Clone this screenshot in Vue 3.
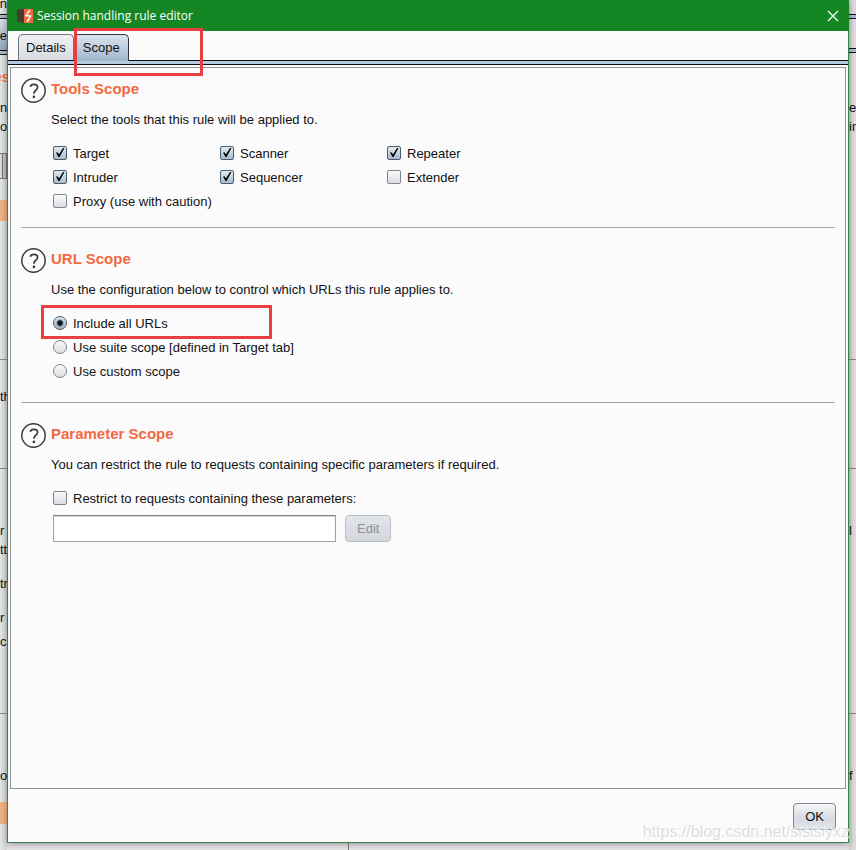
<script setup>
import { ref } from 'vue'

const tools = ref([
  { name: 'Target', on: true },
  { name: 'Scanner', on: true },
  { name: 'Repeater', on: true },
  { name: 'Intruder', on: true },
  { name: 'Sequencer', on: true },
  { name: 'Extender', on: false },
  { name: 'Proxy (use with caution)', on: false },
])

const urlScopes = [
  { id: 'all', label: 'Include all URLs' },
  { id: 'suite', label: 'Use suite scope [defined in Target tab]' },
  { id: 'custom', label: 'Use custom scope' },
]
const urlScope = ref('all')
const restrict = ref(false)
const parameters = ref('')

// Pieces of the parent window that show on either side of the dialog.
const leftTexts = [
  { text: 'n', top: -6 },
  { text: 'Se', top: 26 },
  { text: 'es', top: 67, heading: true },
  { text: 'nc', top: 98, start: true },
  { text: 'o', top: 117, start: true },
  { text: 'th', top: 387, start: true },
  { text: 'r t', top: 521, start: true },
  { text: 'tt', top: 540, start: true },
  { text: 'tr', top: 574, start: true },
  { text: 'r', top: 608, start: true },
  { text: 'c', top: 632, start: true },
  { text: 'or', top: 766, start: true },
]
const rightTexts = [
  { text: 'et', top: 98 },
  { text: 'in', top: 117 },
  { text: 'l .', top: 521 },
  { text: 'f t', top: 766 },
]
const leftRules = [359, 468, 713]
const rightRules = [359, 468, 713]
const swatches = [
  { top: 200, height: 21 },
  { top: 802, height: 22 },
]
</script>

<template>
  <div class="desktop">
    <div class="parent parent-left" aria-hidden="true">
      <i class="tab-fill"></i>
      <i class="band" :style="{ top: '14px' }"></i>
      <i class="band" :style="{ top: '50px' }"></i>
      <i v-for="y in leftRules" :key="y" class="rule" :style="{ top: y + 'px' }"></i>
      <i class="side-button"></i>
      <i
        v-for="s in swatches"
        :key="s.top"
        class="swatch"
        :style="{ top: s.top + 'px', height: s.height + 'px' }"
      ></i>
      <span
        v-for="t in leftTexts"
        :key="t.top"
        :class="['bit', { heading: t.heading, start: t.start }]"
        :style="{ top: t.top + 'px' }"
      >{{ t.text }}</span>
    </div>
    <div class="parent parent-right" aria-hidden="true">
      <i class="band" :style="{ top: '14px' }"></i>
      <i class="band" :style="{ top: '48px' }"></i>
      <i v-for="y in rightRules" :key="y" class="rule" :style="{ top: y + 'px' }"></i>
      <span v-for="t in rightTexts" :key="t.top" class="bit start" :style="{ top: t.top + 'px' }">{{ t.text }}</span>
    </div>
    <i class="splitter"></i>

    <main class="dialog">
      <header class="titlebar">
        <svg class="logo" width="16" height="16" viewBox="0 0 16 16" aria-hidden="true">
          <path d="M0 1.500L7 1v14l-7-1.500z" fill="#4a3a34" />
          <path d="M7 1h9v14H7z" fill="#f4683a" />
          <path d="M12.800 2L9 7.600l4.600 0.600L10 14" fill="none" stroke="#fff" stroke-width="1.500" />
        </svg>
        <h1 class="title">Session handling rule editor</h1>
        <button class="close" type="button" aria-label="Close">
          <svg width="12" height="12" viewBox="0 0 12 12"><path d="M1 1l10 10M11 1L1 11" stroke="#fff" stroke-width="1.200" /></svg>
        </button>
      </header>

      <nav class="tabs">
        <button class="tab" type="button">Details</button>
        <div class="tab-holder">
          <button class="tab active" type="button">Scope</button>
          <i class="mark mark-tab"></i>
        </div>
      </nav>
      <div class="tab-line"></div>

      <div class="panel">
        <section class="section">
          <svg class="help" width="26" height="26" viewBox="0 0 26 26" aria-hidden="true">
            <circle cx="12.500" cy="12.500" r="11.700" fill="none" stroke="#3c3c3c" stroke-width="1.500" />
            <path d="M9.300 8.700C9.700 7 11 6.300 12.900 6.300c2.200 0 3.700 1.100 3.700 3 0 1.500-.8 2.300-2 3.200-1.200.9-1.700 1.500-1.700 3.300" fill="none" stroke="#3c3c3c" stroke-width="1.700" />
            <circle cx="12.900" cy="18.900" r="1.300" fill="#3c3c3c" />
          </svg>
          <div class="content">
            <h2>Tools Scope</h2>
            <p>Select the tools that this rule will be applied to.</p>
            <div class="options grid">
              <label v-for="t in tools" :key="t.name" class="option">
                <span class="box">
                  <input v-model="t.on" type="checkbox">
                  <svg v-if="t.on" class="tick" width="14" height="14" viewBox="0 0 14 14"><path d="M3 6.500h1.800L6 8.600 10 2h1.500L6.600 11H5.400z" fill="#000" /></svg>
                </span>
                {{ t.name }}
              </label>
            </div>
          </div>
        </section>

        <section class="section">
          <svg class="help" width="26" height="26" viewBox="0 0 26 26" aria-hidden="true">
            <circle cx="12.500" cy="12.500" r="11.700" fill="none" stroke="#3c3c3c" stroke-width="1.500" />
            <path d="M9.300 8.700C9.700 7 11 6.300 12.900 6.300c2.200 0 3.700 1.100 3.700 3 0 1.500-.8 2.300-2 3.200-1.200.9-1.700 1.500-1.700 3.300" fill="none" stroke="#3c3c3c" stroke-width="1.700" />
            <circle cx="12.900" cy="18.900" r="1.300" fill="#3c3c3c" />
          </svg>
          <div class="content">
            <h2>URL Scope</h2>
            <p>Use the configuration below to control which URLs this rule applies to.</p>
            <div class="options">
              <i class="mark mark-option"></i>
              <label v-for="s in urlScopes" :key="s.id" class="option">
                <span class="box"><input v-model="urlScope" type="radio" name="url-scope" :value="s.id"></span>
                {{ s.label }}
              </label>
            </div>
          </div>
        </section>

        <section class="section">
          <svg class="help" width="26" height="26" viewBox="0 0 26 26" aria-hidden="true">
            <circle cx="12.500" cy="12.500" r="11.700" fill="none" stroke="#3c3c3c" stroke-width="1.500" />
            <path d="M9.300 8.700C9.700 7 11 6.300 12.900 6.300c2.200 0 3.700 1.100 3.700 3 0 1.500-.8 2.300-2 3.200-1.200.9-1.700 1.500-1.700 3.300" fill="none" stroke="#3c3c3c" stroke-width="1.700" />
            <circle cx="12.900" cy="18.900" r="1.300" fill="#3c3c3c" />
          </svg>
          <div class="content">
            <h2>Parameter Scope</h2>
            <p>You can restrict the rule to requests containing specific parameters if required.</p>
            <div class="options">
              <label class="option">
                <span class="box">
                  <input v-model="restrict" type="checkbox">
                  <svg v-if="restrict" class="tick" width="14" height="14" viewBox="0 0 14 14"><path d="M3 6.500h1.800L6 8.600 10 2h1.500L6.600 11H5.400z" fill="#000" /></svg>
                </span>
                Restrict to requests containing these parameters:
              </label>
              <div class="entry">
                <input v-model="parameters" class="field" type="text" aria-label="Parameters" :disabled="!restrict">
                <button class="btn" type="button" :disabled="!restrict">Edit</button>
              </div>
            </div>
          </div>
        </section>
      </div>

      <footer class="footer">
        <button class="btn ok" type="button">OK</button>
      </footer>
    </main>
    <span class="watermark">https://blog.csdn.net/sisislyxz</span>
  </div>
</template>

<style>
body {
  margin: 0;
}
</style>

<style scoped>
.desktop {
  position: relative;
  display: flex;
  box-sizing: border-box;
  min-height: 100vh;
  padding: 0 7px 7px;
  overflow: hidden;
  background: #e4e2e5;
  color: #111;
  font: 13px/20px "Liberation Sans", Arial, sans-serif;
}
.parent {
  position: absolute;
  top: 0;
  bottom: 0;
  width: 7px;
  overflow: hidden;
}
.parent-left {
  left: 0;
  background: linear-gradient(90deg, #e6e4e7, #cbd8cc);
}
.parent-right {
  right: 0;
  background: linear-gradient(90deg, #c3d3c4, #dedade 60%);
}
.parent i {
  position: absolute;
  left: 0;
  right: 0;
}
.band {
  height: 3px;
  border: solid #111;
  border-width: 1px 0;
  background: #a9b9cb;
}
.tab-fill {
  top: 20px;
  height: 31px;
  background: linear-gradient(#d4dae0, #92a7bb);
}
.rule {
  height: 1px;
  background: #888d8c;
}
.side-button {
  top: 153px;
  height: 24px;
  border: 1px solid #777;
  border-left: 0;
  background: linear-gradient(90deg, #d9d3dd 30%, #777 30%, #777 44%, #b5c5b5 44%);
}
.swatch {
  background: #eeb183;
}
.bit {
  position: absolute;
  right: 0;
  white-space: nowrap;
}
.bit.start {
  right: auto;
  left: 0;
}
.bit.heading {
  right: -3px;
  color: #f26a42;
  font-size: 15px;
  font-weight: bold;
}
.splitter {
  position: absolute;
  bottom: 0;
  left: 348px;
  width: 1px;
  height: 7px;
  background: #777;
}
.dialog {
  position: relative;
  display: flex;
  flex: 1;
  flex-direction: column;
  min-width: 0;
  border: 1px solid #34834a;
  border-top: 0;
  background: #fbfbfb;
  box-shadow: 0 1px 6px rgba(0, 0, 0, 0.35);
}
.titlebar {
  display: flex;
  align-items: center;
  height: 31px;
  margin: 0 -1px;
  padding: 0 10px;
  background: #148623;
}
.title {
  flex: 1;
  margin: 0 0 0 4px;
  color: #fff;
  font: 12px/20px "Open Sans", "Noto Sans", sans-serif;
}
.close {
  display: flex;
  padding: 0;
  border: 0;
  background: none;
}
.tabs {
  display: flex;
  padding: 3px 10px 0;
}
.tab {
  height: 26px;
  padding: 0 7px;
  border: 1px solid #6e7680;
  border-bottom: 0;
  border-radius: 5px 5px 0 0;
  background: linear-gradient(#f1f1f3, #d9dbe0);
  color: #111;
  font: inherit;
}
.tab.active {
  height: 27px;
  margin-bottom: -1px;
  padding: 0 8px;
  border-color: #2b3947;
  background: linear-gradient(#dce4ec, #9fb6cc);
}
.tab-holder {
  position: relative;
}
.tab-line {
  height: 3px;
  border: solid #0b0b10;
  border-width: 1px 0;
  background: #b5c9de;
}
.mark {
  position: absolute;
  box-sizing: border-box;
  border: 3px solid #ea3f40;
  pointer-events: none;
}
.mark-tab {
  z-index: 1;
  top: -6px;
  left: 0;
  width: 129px;
  height: 48px;
}
.mark-option {
  top: -6px;
  left: -10px;
  width: 231px;
  height: 34px;
}
.panel {
  flex: 1;
  margin: 2px 2px 0;
  padding: 0 10px;
  border: 1px solid #8f9499;
}
.section {
  display: flex;
  gap: 4px;
  padding: 21px 0 19px;
  border-bottom: 1px solid #a5a5a5;
}
.section:first-child {
  padding: 11px 0 14px;
}
.section:last-child {
  border-bottom: 0;
}
.help {
  flex: none;
  margin-top: -1px;
}
.content {
  flex: 1;
  min-width: 0;
}
h2 {
  margin: 0 0 11px;
  color: #f26a42;
  font-size: 15px;
  line-height: 20px;
}
p {
  margin: 0 0 11px;
}
.options {
  position: relative;
  padding-left: 2px;
}
.grid {
  display: grid;
  grid-template-columns: repeat(3, 167px);
}
.option {
  display: flex;
  align-items: flex-start;
  gap: 6px;
  height: 24px;
  line-height: 26px;
  white-space: nowrap;
}
.box {
  position: relative;
  display: flex;
  margin-top: 5px;
}
.tick {
  position: absolute;
  inset: 0;
  pointer-events: none;
}
.box input {
  box-sizing: border-box;
  width: 14px;
  height: 14px;
  margin: 0;
  border: 1px solid #81868c;
  border-radius: 2px;
  background: linear-gradient(#fafafa, #d9dce1);
  appearance: none;
}
.box input[type="checkbox"]:checked {
  border-color: #4c5b6a;
  background: linear-gradient(#e3ebf2, #a6bbce);
}
.box input[type="radio"] {
  border-radius: 50%;
}
.box input[type="radio"]:checked {
  border-color: #4c5b6a;
  background: radial-gradient(circle, #101418 2px, transparent 4px), linear-gradient(#dfe8f0, #9db2c6);
}
.entry {
  display: flex;
  gap: 9px;
  margin-top: 5px;
}
.field {
  box-sizing: border-box;
  width: 283px;
  height: 27px;
  padding: 0 6px;
  border: 1px solid #a0a3a6;
  border-top-color: #7d8083;
  background: #fff;
  box-shadow: inset 0 1px 1px #d5d5d5;
  font: inherit;
}
.btn {
  height: 27px;
  padding: 0 11px;
  border: 1px solid #7e858e;
  border-radius: 4px;
  background: linear-gradient(#f5f6f8, #d5d9e0 60%, #e3e6eb);
  color: #111;
  font: inherit;
}
.btn:disabled {
  border-color: #b9bec5;
  background: linear-gradient(#e2e5ea, #d3d7de);
  color: #8e9196;
}
.footer {
  display: flex;
  justify-content: flex-end;
  padding: 14px 12px 12px;
}
.watermark {
  position: absolute;
  right: 7px;
  bottom: 8px;
  color: #dedede;
  font-size: 16px;
  text-shadow: 1px 1px 1px #fff;
  pointer-events: none;
}
</style>
